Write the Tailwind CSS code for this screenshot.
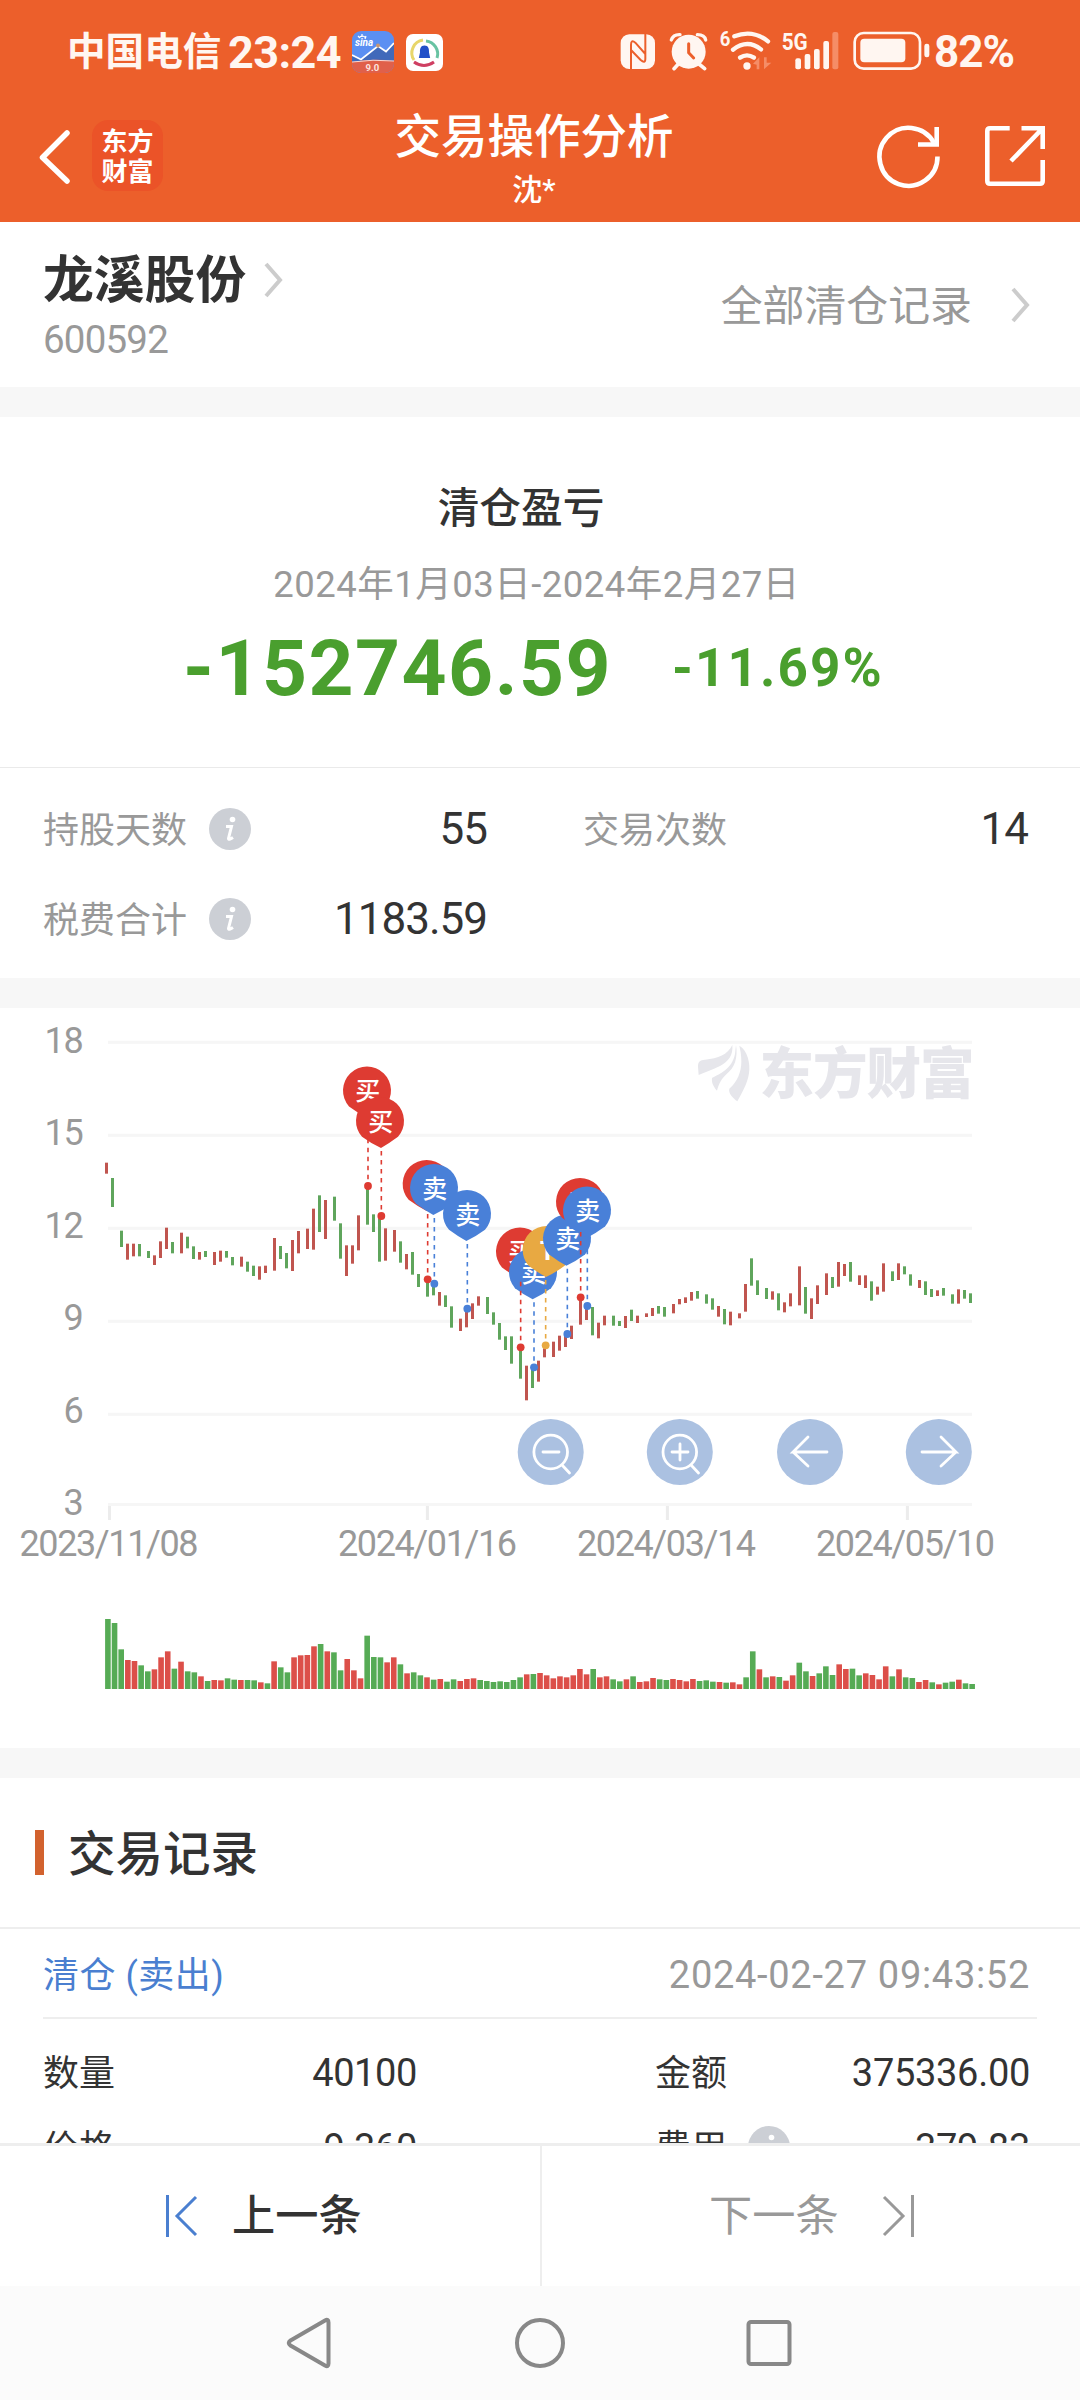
<!DOCTYPE html>
<html lang="zh-CN">
<head>
<meta charset="utf-8">
<title>交易操作分析</title>
<script src="https://cdn.jsdelivr.net/npm/@tailwindcss/browser@4"></script>
</head>
<body class="w-[1080px] h-[2400px] overflow-hidden flex flex-col bg-white text-[#333] font-['Roboto','Noto_Sans_CJK_SC',sans-serif] antialiased">

<!-- Header -->
<header class="h-[222px] shrink-0 bg-[#ec5f2b] text-white">
  <div class="h-[104px] flex items-center pl-[67px] text-[#fff6f1] font-bold">
    <span class="w-[161px] text-[38.6px] leading-none whitespace-nowrap">中国电信</span>
    <span class="w-[124px] text-[45px] leading-none tracking-[-0.6px] whitespace-nowrap">23:24</span>
    <svg class="w-[42px] h-[42px]" viewBox="0 0 42 42">
      <clipPath id="sinaClip"><rect width="42" height="42" rx="9"/></clipPath>
      <g clip-path="url(#sinaClip)">
        <rect width="42" height="42" fill="#5b8ff2"/>
        <path d="M0 24L9 28L26 15L34 20L42 12V31H0Z" fill="#4169ba"/>
        <path d="M0 24L9 28.5L26 15L34 20.5L42 12" fill="none" stroke="#fff" stroke-width="1.8"/>
        <path d="M0 31Q21 27 42 30V42H0Z" fill="#e0604a"/>
        <path d="M0 31Q21 28 42 30" fill="none" stroke="#f6d9d5" stroke-width="1"/>
        <circle cx="26" cy="14.500" r="2" fill="#c99672"/>
        <path d="M7 7Q10 3 14 7M10 3V6M6 5L8 7M14 5L13 8" fill="none" stroke="#fff" stroke-width="1.200"/>
        <text x="3" y="15" font-family="Roboto" font-style="italic" font-weight="700" font-size="10" fill="#fff">sina</text>
        <text x="13.500" y="40" font-family="Roboto" font-weight="700" font-size="9.500" fill="#fde3df">9.0</text>
      </g>
    </svg>
    <svg class="ml-[12px] w-[37px] h-[37px]" viewBox="0 0 37 37">
      <rect width="37" height="37" rx="7" fill="#fff"/>
      <g fill="none" stroke-width="3">
        <path d="M17 6A13 13 0 0 0 8 26" stroke="#e8d66a"/>
        <path d="M20 7A13 13 0 0 1 31 24" stroke="#68c3a2"/>
        <path d="M8 28Q18 35 28 28" stroke="#cf3f62"/>
      </g>
      <path d="M18.500 11.500C14.500 11.500 13.800 15 14 18.500L12.800 24H24.200L23 18.500C23.200 15 22.500 11.500 18.500 11.500Z" fill="#2250c8"/>
    </svg>
    <svg class="ml-[167px] w-[320px] h-[56px]" viewBox="0 0 960 168" fill="#fff6f1">
      <rect x="32" y="31" width="103" height="104" rx="26"/>
      <path d="M63 135V62Q63 45 76 56L106 90V31M106 28V104Q106 120 92 108L63 78" fill="none" stroke="#ec5f2b" stroke-width="6"/>
      <circle cx="236" cy="83" r="51"/>
      <path d="M205 120L192 134M267 120L284 134" stroke="#fff6f1" stroke-width="11" stroke-linecap="round"/>
      <path d="M184 48Q190 31 210 32M262 32Q284 32 287 48" fill="none" stroke="#fff6f1" stroke-width="10" stroke-linecap="round"/>
      <path d="M236 59V86L251 102" fill="none" stroke="#ec5f2b" stroke-width="9" stroke-linecap="round"/>
      <text x="329" y="66" font-family="Roboto" font-weight="700" font-size="62" textLength="32" lengthAdjust="spacingAndGlyphs">6</text>
      <g fill="none" stroke="#fff6f1" stroke-width="13" stroke-linecap="round">
        <path d="M373 37Q428 15 474 52"/><path d="M369 77Q412 44 453 76"/><path d="M390 101Q411 87 432 101"/>
      </g>
      <circle cx="411" cy="126" r="11"/>
      <path d="M429 119L448 100V136H440V122ZM462 100V136L484 116H470V100Z" fill="#f58d67"/>
      <text x="515" y="79" font-family="Roboto" font-weight="700" font-size="74" textLength="78" lengthAdjust="spacingAndGlyphs">5G</text>
      <rect x="556" y="103" width="17" height="33" rx="6"/><rect x="584" y="90" width="17" height="46" rx="6"/><rect x="612" y="75" width="17" height="61" rx="6"/><rect x="640" y="51" width="17" height="85" rx="6"/>
      <rect x="667" y="24" width="18" height="112" rx="6" fill="#f58d67"/>
      <rect x="734" y="27" width="196" height="107" rx="27" fill="none" stroke="#fff6f1" stroke-width="8"/>
      <rect x="751" y="44" width="135" height="71" rx="12"/>
      <rect x="943" y="59" width="15" height="41" rx="7"/>
    </svg>
    <span class="ml-[4px] text-[44px] leading-none tracking-[-1px]">82%</span>
  </div>
  <div class="h-[118px] flex items-start">
    <svg class="mt-[25px] ml-[36px] w-[36px] h-[56px]" viewBox="0 0 36 56"><path d="M31 4L6.500 28.500L31 52" fill="none" stroke="#fff" stroke-width="5.500" stroke-linecap="round" stroke-linejoin="round"/></svg>
    <div class="mt-[16px] ml-[20px] w-[71px] h-[71px] rounded-[16px] bg-[#eb5328] flex flex-col items-center justify-center pt-[3px] text-[26px] font-bold leading-[30px]"><span>东方</span><span>财富</span></div>
    <div class="ml-[231px] mt-[6px] w-[280px] text-center whitespace-nowrap">
      <h1 class="text-[46.5px] leading-[54px] font-medium">交易操作分析</h1>
      <p class="text-[30px] leading-[51px] font-medium">沈*</p>
    </div>
    <svg class="mt-[18px] ml-[199px] w-[72px] h-[72px]" viewBox="873 122 72 72" fill="none" stroke="#fff" stroke-width="4.600"><path d="M937.500 156.500A29 29 0 1 1 934 143"/><path d="M936.700 127V144.500H918"/></svg>
    <svg class="mt-[18px] ml-[34px] w-[72px] h-[72px]" viewBox="979 122 72 72" fill="none" stroke="#fff" stroke-width="4.600"><path d="M1009.700 128.300H990Q987.300 128.300 987.300 131V181Q987.300 183.700 990 183.700H1040Q1042.700 183.700 1042.700 181V160M1021.500 128.300H1042.700V149M1042 129L1011 161"/></svg>
  </div>
</header>

<!-- Stock -->
<section class="h-[165px] shrink-0 flex justify-between pl-[43px] pr-[48px]">
  <div class="pt-[28px]">
    <div class="flex items-center h-[60px]">
      <span class="pt-[3px] text-[50.8px] leading-none font-bold">龙溪股份</span>
      <svg class="ml-[15px] w-[24px] h-[40px]" viewBox="0 0 24 40"><path d="M5 4L19 20L5 36" fill="none" stroke="#ccc" stroke-width="4"/></svg>
    </div>
    <div class="text-[38.500px] leading-[60px] tracking-[-0.8px] text-[#999]">600592</div>
  </div>
  <div class="flex items-center h-[166px] text-[#999]">
    <span class="pt-[3px] text-[41.900px] leading-none">全部清仓记录</span>
    <svg class="ml-[36px] w-[24px] h-[40px]" viewBox="0 0 24 40"><path d="M5 4L19 20L5 36" fill="none" stroke="#ccc" stroke-width="4"/></svg>
  </div>
</section>
<div class="h-[30px] shrink-0 bg-[#f7f7f7]"></div>

<!-- Result -->
<section class="h-[561px] shrink-0">
  <div class="h-[351px] border-b border-[#eaeaea] flex flex-col items-center pt-[64px]">
    <h2 class="text-[41.700px] leading-[56px] font-medium mr-[38px]">清仓盈亏</h2>
    <p class="mt-[20px] text-[36.500px] leading-[56px] tracking-[0.480px] text-[#999] mr-[7px] whitespace-nowrap">2024年1月03日-2024年2月27日</p>
    <div class="flex items-center mt-[9px] h-[92px] w-full pl-[183px] text-[#4a9f2e] font-bold whitespace-nowrap">
      <span class="w-[489px] text-[78.500px] leading-none tracking-[1.500px]">-152746.59</span>
      <span class="text-[53px] leading-none tracking-[2.100px]">-11.69%</span>
    </div>
  </div>
  <dl class="grid grid-cols-[444px_540px] gap-x-[96px] pl-[43px] pt-[16px] text-[#999] text-[36px]">
    <div class="h-[90px] flex items-center"><dt class="pt-[3px] leading-none">持股天数</dt>
      <svg class="ml-[22px] w-[42px] h-[42px]" viewBox="0 0 42 42"><circle cx="21" cy="21" r="21" fill="#cccfd5"/><circle cx="23.500" cy="11.500" r="2.800" fill="#fff"/><path d="M17 18.500H22.500L19.500 30.500Q19.500 32.500 24 29.500" fill="none" stroke="#fff" stroke-width="3"/></svg>
      <dd class="ml-auto text-[44px] leading-none tracking-[-1px] text-[#333]">55</dd></div>
    <div class="h-[90px] flex items-center"><dt class="pt-[3px] leading-none">交易次数</dt><dd class="ml-auto mr-[95px] text-[44px] leading-none tracking-[-1px] text-[#333]">14</dd></div>
    <div class="h-[90px] flex items-center"><dt class="pt-[3px] leading-none">税费合计</dt>
      <svg class="ml-[22px] w-[42px] h-[42px]" viewBox="0 0 42 42"><circle cx="21" cy="21" r="21" fill="#cccfd5"/><circle cx="23.500" cy="11.500" r="2.800" fill="#fff"/><path d="M17 18.500H22.500L19.500 30.500Q19.500 32.500 24 29.500" fill="none" stroke="#fff" stroke-width="3"/></svg>
      <dd class="ml-auto text-[44px] leading-none tracking-[-1px] text-[#333]">1183.59</dd></div>
  </dl>
</section>
<div class="h-[30px] shrink-0 bg-[#f7f7f7]"></div>

<!-- Chart -->
<section class="h-[740px] shrink-0">
  <svg id="chart" class="block w-[1080px] h-[740px]" viewBox="0 1008 1080 740">
    <g id="grid"></g>
    <g fill="#e6e6eb">
      <g transform="translate(640 1030) scale(.33333)">
        <path d="M176 135L174 110C174 94 180 90 195 89C235 85 262 75 277 45C280 75 265 95 240 108C215 120 195 127 176 135Z"/>
        <path d="M288 45C294 82 285 112 260 132C245 145 237 160 231 182C222 172 214 160 216 144C238 132 276 118 285 72Z"/>
        <path d="M298 47C322 60 332 100 327 130C323 160 305 190 292 214C280 205 264 190 268 176C292 155 304 125 304 95C304 75 301 60 298 47Z"/>
      </g>
      <text x="759.500" y="1093" font-family="Noto Sans CJK SC" font-weight="900" font-size="54.500" textLength="215">东方财富</text>
    </g>
    <g id="candles"></g>
    <g id="pins"></g>
    <g id="stems"></g>
    <g id="buttons" fill="#abc1e1">
      <circle cx="550.700" cy="1452" r="33"/><circle cx="679.800" cy="1452" r="33"/><circle cx="810" cy="1452" r="33"/><circle cx="938.800" cy="1452" r="33"/>
      <g fill="none" stroke="#fff" stroke-width="2.800" stroke-linecap="round">
        <circle cx="550.700" cy="1452" r="16.800"/><path d="M543 1452H559M562.500 1465.500L569.500 1473"/>
        <circle cx="679.800" cy="1452" r="16.800"/><path d="M672 1452H688M680 1444V1460M691.500 1465.500L698.500 1473"/>
        <path d="M827 1452H793L808 1437M793 1452L808 1466"/>
        <path d="M922 1452H956L941 1437M956 1452L941 1466"/>
      </g>
    </g>
    <g id="volume"></g>
  </svg>
</section>
<div class="h-[30px] shrink-0 bg-[#f7f7f7]"></div>

<!-- Records -->
<section class="h-[365px] shrink-0 overflow-hidden">
  <div class="h-[151px] border-b-2 border-[#eee] flex items-center pl-[35px]">
    <span class="w-[9px] h-[45px] bg-[#d2622e]"></span>
    <h2 class="ml-[24px] pt-[6px] text-[47.500px] leading-none font-medium">交易记录</h2>
  </div>
  <div class="mx-[43px] h-[90px] border-b-2 border-[#eee] flex items-center justify-between pr-[7px]">
    <span class="pt-[5px] text-[36px] leading-none tracking-[0.500px] text-[#4a7fd0]">清仓 (卖出)</span>
    <span class="pt-[3px] text-[38px] leading-none tracking-[0.700px] text-[#999]">2024-02-27 09:43:52</span>
  </div>
  <div class="px-[43px] pt-[16px] text-[36px] leading-none">
    <div class="h-[75px] flex items-center">
      <span class="w-[200px] pt-[2px]">数量</span><span class="w-[174px] text-right text-[38px] tracking-[-0.400px]">40100</span>
      <span class="ml-[238px] pt-[2px]">金额</span><span class="ml-auto mr-[7px] text-[38px] tracking-[-0.300px]">375336.00</span>
    </div>
    <div class="h-[75px] flex items-center">
      <span class="w-[200px] pt-[2px]">价格</span><span class="w-[174px] text-right text-[38px] tracking-[-0.400px]">9.360</span>
      <span class="ml-[238px] pt-[2px]">费用</span>
      <svg class="ml-[21px] -mt-[2px] w-[42px] h-[42px]" viewBox="0 0 42 42"><circle cx="21" cy="21" r="21" fill="#cccfd5"/><circle cx="23.500" cy="11.500" r="2.800" fill="#fff"/><path d="M17 18.500H22.500L19.500 30.500Q19.500 32.500 24 29.500" fill="none" stroke="#fff" stroke-width="3"/></svg>
      <span class="ml-auto mr-[7px] text-[38px] tracking-[-0.300px]">379.83</span>
    </div>
  </div>
</section>

<!-- Pager -->
<div class="h-[143px] shrink-0 border-t-3 border-[#eee] grid grid-cols-[542px_538px] text-[43.200px] leading-none">
  <button class="border-r-2 border-[#eee] flex items-center pl-[164px] font-medium">
    <svg class="w-[36px] h-[44px]" viewBox="0 0 36 44" fill="none" stroke="#4a7fd0" stroke-width="3"><path d="M3.500 1V43M32 3L13 22L32 41"/></svg>
    <span class="ml-[32px] pt-[2px]">上一条</span>
  </button>
  <button class="flex items-center pl-[167px] text-[#999]">
    <span class="pt-[2px]">下一条</span>
    <svg class="ml-[41px] w-[36px] h-[44px]" viewBox="0 0 36 44" fill="none" stroke="#999" stroke-width="3"><path d="M32.500 1V43M4 3L23 22L4 41"/></svg>
  </button>
</div>

<!-- System navigation -->
<nav class="h-[114px] shrink-0 bg-[#fbfbfb]">
  <svg class="block w-[1080px] h-[114px]" viewBox="0 2286 1080 114" fill="none" stroke="#888" stroke-width="4">
    <path d="M290.500 2340.500L325 2320.500Q328.500 2318.500 328.500 2322.500V2363.500Q328.500 2367.500 325 2365.500L290.500 2345.500Q287 2343 290.500 2340.500Z"/>
    <circle cx="540" cy="2343" r="23"/>
    <rect x="748.500" y="2322" width="41" height="42" rx="2.500"/>
  </svg>
</nav>

<script>
const NS = 'http://www.w3.org/2000/svg';
function add(id, tag, attrs, text) {
  const e = document.createElementNS(NS, tag);
  for (const k in attrs) e.setAttribute(k, attrs[k]);
  if (text) e.textContent = text;
  document.getElementById(id).appendChild(e);
}
// Axes
[[18,1042.3,1040],[15,1135.3,1132.500],[12,1228.3,1225.500],[9,1321.3,1317.500],[6,1414.3,1410],[3,1504.5,1502]].forEach(([n,y,t]) => {
  add('grid','rect',{x:108,y:y-1.5,width:864,height:3,fill:'#f6f6f6'});
  add('grid','text',{x:82.5,y:t+12.8,'text-anchor':'end','font-size':36,'letter-spacing':-1.2,fill:'#999','font-family':'Roboto'},String(n));
});
[[109.5,'2023/11/08',19.5],[427.4,'2024/01/16',338],[667.4,'2024/03/14',577],[907.4,'2024/05/10',816]].forEach(([x,s,l]) => {
  add('grid','rect',{x:x-1.5,y:1506,width:3,height:14,fill:'#ececec'});
  add('grid','text',{x:l,y:1555.5,'font-size':36,fill:'#999','font-family':'Roboto',textLength:179},s);
});
// Candles: position, high, low, direction, in thirds of a pixel from each block's origin
const blocks = [
 [80,1000,'79 488 521R,97 534 621G,124 692 741G,142 731 779R,160 731 769R,178 732 769G,205 753 774G,223 766 795R,241 724 774R,259 683 747R,277 726 760G,304 698 760R,322 710 745G,340 739 777G,358 756 779R,376 753 771G,403 756 795R,421 752 785R,439 753 773G,457 771 796G,484 770 800R,502 785 815G,520 797 828G,538 799 839R,556 797 819R,583 714 812R,601 738 777G,619 759 805G,637 720 813R,655 693 760R,682 686 747R,700 626 749R,718 586 696G,736 600 717R,763 590 662G,781 670 776G,799 736 828R,817 736 791R,835 646 751R,862 560 674G,880 643 696G,898 655 785G,916 685 782R,943 690 755R,961 724 788G,979 762 808R,997 756 824G,1015 822 861G,1042 840 890G,1060 855 886G'],
 [320,1040,'358 756 797R,376 766 801G,394 799 863G,421 836 873R,439 808 862R,457 790 837R,475 769 797R,502 771 822G,520 817 854G,538 849 899G,556 889 930G,574 889 971G,601 925 1016G,619 977 1081R,637 985 1044G,655 962 1025R,673 925 952R,700 905 951R,718 887 932R,736 885 921R,754 857 897R,781 775 854R,799 800 840R,817 801 886G,835 848 895R,853 827 856R,880 827 857G,898 843 858G,916 828 864R,934 809 843G,952 827 849R'],
 [640,1030,'19 850 861R,37 834 858R,55 828 851G,73 831 860G,100 822 850R,118 807 823R,136 802 819R,154 786 812R,172 783 806G,199 793 821G,217 805 839G,235 828 860R,253 837 883G,271 845 886R,298 850 865R,316 762 845R,334 685 767G,352 751 795G,379 774 807G,397 784 809R,415 790 841G,433 817 847R,451 790 829R,478 709 826R,496 771 851G,514 805 867R,532 766 822R,559 730 795R,577 741 774G,595 696 770R,613 702 738R,631 696 755G,658 736 765R,676 736 774R,694 754 812G,712 770 794R,730 700 785R,757 724 753G,775 700 750R,793 709 733G,811 733 767G,838 750 774R,856 754 795G,874 777 801G,892 781 798R,910 774 797G,937 793 821G,955 778 821R,973 780 806G,991 790 819G']
];
blocks.forEach(([ox,oy,s]) => s.split(',').forEach(c => {
  const [x,a,b] = c.split(' ').map(parseFloat);
  add('candles','rect',{x:ox+Math.round((x-4.5)/3),y:oy+a/3,width:3,height:(b-a)/3,fill:c.endsWith('R')?'#c0554f':'#5fa55c'});
}));
// Trade pins: circle centre, tip, stem x, end of stem
const R='#de3b32', B='#4980d8', Y='#e8a942';
[[141,152,141,144,438,R,'买'],[180,243,183,184,528,R,'买'],[320,432,320,323,718,R,''],[342,444,340,343,731,B,'卖'],[441,522,439,442,806,B,'卖'],
 [600,635,600,602,922,R,'买'],[639,697,638,642,982,B,'卖'],[680,630,678,677,916,Y,'T'],[741,596,739,742,882,B,'卖'],[780,486,780,782,772,R,'买'],[801,512,801,802,798,B,'卖']
].forEach(([x,y,t,sx,ey,c,s]) => {
  const X=320+x/3, Y0=1040+y/3, T=320+t/3, S=320+sx/3, E=1040+ey/3;
  add('pins','path',{d:`M${X-18} ${Y0+15.8}A24 24 0 1 1 ${X+18} ${Y0+15.8}Q${X+9} ${Y0+22.5} ${T} ${Y0+27}Q${X-9} ${Y0+22.5} ${X-18} ${Y0+15.8}Z`,fill:c});
  if (s) add('pins','text',{x:X+.8,y:Y0+9.6,'text-anchor':'middle','font-size':25,'font-weight':s==='T'?700:500,fill:'#fff','font-family':'Noto Sans CJK SC'},s);
  add('stems','path',{d:`M${S} ${Y0+30}V${E}`,stroke:c,'stroke-width':1.6,'stroke-dasharray':'4.5 4.5',fill:'none'});
  add('stems','circle',{cx:S,cy:E,r:3.9,fill:c});
});
// Volume: top edge and direction of each bar
const vol='687G699G778G810R813R826G844G838R802R784R836G815R844G847G859R873G870R871R865G869G870R870G871G877R880G814R832G847G802R796R795R769R762G784R787G841G807R841R865R737G801G802G817R802R823G850R847G856G862R869G867R875G868G873R867R865R870G873G876G874G876G870G862G853R852G849R856R865R859R862R856R837R853R837G862R859R868G874G868R859G876R874R864R868G870G867R870R874R867R873G871G875G876R878G877R883R862G784G838R862G859R861G872R856R818G844G858R850G829G855G823R837R836G856G850R855R868R829R859G838R862G864G876R870R877G883R878G875G869R880G882G'.match(/\d+[RG]/g);
vol.forEach((v,i) => {
  const h=(897-parseInt(v))/3;
  add('volume','rect',{x:105.1+i*6.648,y:1689-h,width:5.6,height:h,fill:v.endsWith('R')?'#dc4f49':'#56ab55'});
});
</script>
</body>
</html>
